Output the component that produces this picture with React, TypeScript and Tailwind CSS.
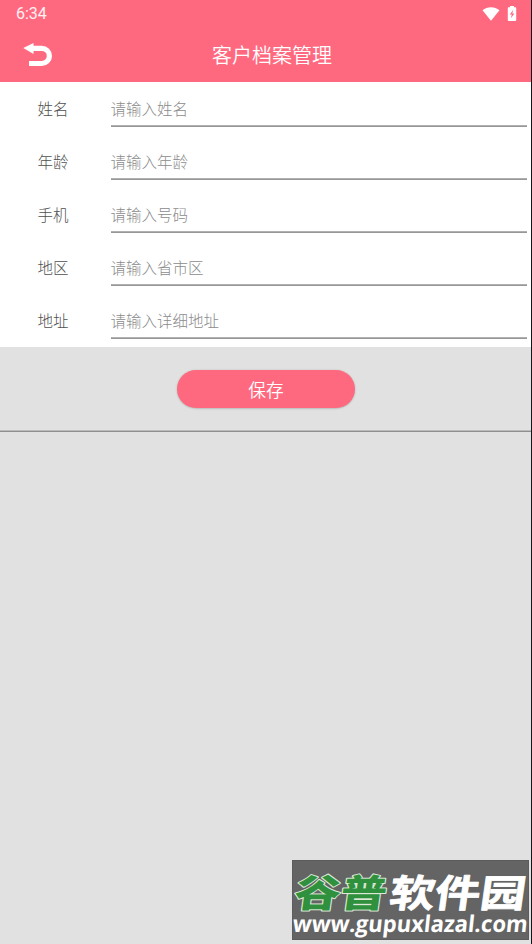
import { useState } from "react";

const fields = [
  { key: "name", label: "姓名", placeholder: "请输入姓名" },
  { key: "age", label: "年龄", placeholder: "请输入年龄" },
  { key: "phone", label: "手机", placeholder: "请输入号码" },
  { key: "region", label: "地区", placeholder: "请输入省市区" },
  { key: "address", label: "地址", placeholder: "请输入详细地址" },
];

function StatusBar() {
  return (
    <div className="flex h-[27px] items-center justify-between pr-[14px] pl-[16px]">
      <span className="font-['Roboto',sans-serif] text-[16px] leading-none text-white/90">6:34</span>
      <div className="flex items-center gap-[7px] text-white">
        <svg width="18" height="14" viewBox="0 0 18 14" fill="currentColor">
          <path d="M0.5 3.2C5.4-.7 12.6-.7 17.5 3.2L9 13.8Z" />
        </svg>
        <svg width="10" height="15" viewBox="0 0 10 15" fill="currentColor">
          <path d="M3 0h4v1.3h1.4q.8 0 .8.8v12.1q0 .8-.8.8H1.6q-.8 0-.8-.8V2.1q0-.8.8-.8H3Z" />
          <path d="M6.3 3.8 2.8 8.6h2l-.9 3.7 3.5-4.9H5.3Z" fill="#ff6980" />
        </svg>
      </div>
    </div>
  );
}

function Header() {
  return (
    <div className="grid h-[55px] grid-cols-[77px_1fr_64px] items-center text-white">
      <button className="pl-[23px]" aria-label="返回">
        <svg width="30" height="24" viewBox="0 0 30 24">
          <path d="M0.3 5 10.5 0v11Z" fill="currentColor" />
          <path d="M9 5.3h9.8a7.2 7.2 0 0 1 0 15.2H6" fill="none" stroke="currentColor" strokeWidth="5.2" />
        </svg>
      </button>
      <h1 className="text-center text-[20px] font-[350] leading-none">客户档案管理</h1>
    </div>
  );
}

function Watermark() {
  return (
    <div className="absolute right-[2px] bottom-[4px] h-[80px] w-[237px] border border-[#5c5c5c] bg-[#646464]">
      <svg width="235" height="78" viewBox="0 0 235 78" className="overflow-visible">
        <g
          transform="translate(0 45.5) skewX(-8)"
          fontFamily="'Noto Sans CJK SC', sans-serif"
          strokeLinejoin="round"
        >
          <text
            x="0"
            y="0"
            fontSize="38"
            fontWeight="900"
            textLength="92"
            lengthAdjust="spacingAndGlyphs"
            fill="#2f913e"
            stroke="#dbe9d6"
            strokeWidth="2"
            paintOrder="stroke"
          >
            谷普
          </text>
          <text
            x="95"
            y="0"
            fontSize="38"
            fontWeight="700"
            textLength="136"
            lengthAdjust="spacingAndGlyphs"
            fill="#fff"
            stroke="#fff"
            strokeWidth="0.8"
          >
            软件园
          </text>
        </g>
        <text
          transform="translate(0 70.5) skewX(-6)"
          x="-1"
          y="0"
          fontFamily="'Open Sans', sans-serif"
          fontWeight="700"
          fontSize="23"
          textLength="235"
          lengthAdjust="spacingAndGlyphs"
          fill="#fff"
        >
          www.gupuxlazal.com
        </text>
      </svg>
    </div>
  );
}

export default function App() {
  const [values, setValues] = useState<Record<string, string>>({});

  return (
    <div className="relative h-[944px] w-[532px] border-r border-[#14141c] bg-[#e1e1e1] font-['Noto_Sans_CJK_SC',sans-serif]">
      <div className="bg-[#ff6980]">
        <StatusBar />
        <Header />
      </div>

      <div className="bg-white">
        {fields.map((field) => (
          <label key={field.key} className="flex h-[53px] pr-[4px] pb-[8px] pl-[37.5px]">
            <span className="w-[73px] pt-[14px] text-[15.5px] font-light leading-6 text-[#505050]">
              {field.label}
            </span>
            <input
              className="min-w-0 flex-1 border-b border-[#979797] pt-[11px] pb-[2px] text-[15.5px] font-light shadow-[inset_0_-1px_0_#b0b0b0] outline-none placeholder:text-[#8c8c8c]"
              placeholder={field.placeholder}
              value={values[field.key] || ""}
              onChange={(e) => setValues({ ...values, [field.key]: e.target.value })}
            />
          </label>
        ))}
      </div>

      <div className="flex h-[85px] justify-center border-b border-[#8f8f8f] pt-[23px] shadow-[inset_0_-1px_0_#bbbbbb]">
        <button className="h-[38px] w-[178px] rounded-full bg-[#ff6980] pl-[1px] text-[17.7px] font-[350] text-white shadow-[0_0.5px_2px_rgba(0,0,0,0.25)]">
          保存
        </button>
      </div>

      <Watermark />
    </div>
  );
}
